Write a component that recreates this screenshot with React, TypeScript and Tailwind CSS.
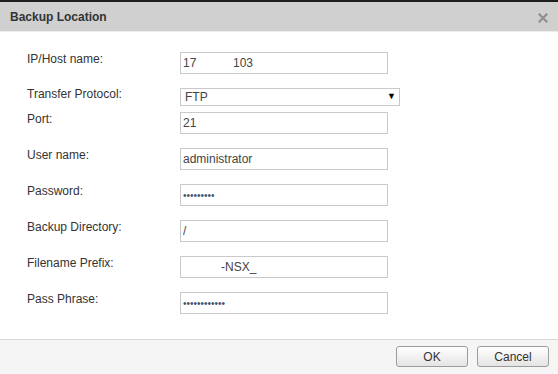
import React from 'react';

const font = { fontFamily: '"Liberation Sans", Arial, sans-serif' };

function Field({
  label,
  value,
  type = 'text',
  className = 'text-[12px] text-[#444]',
  top = 'mt-[14px]',
}: {
  label: string;
  value: string;
  type?: string;
  className?: string;
  top?: string;
}) {
  return (
    <div className={`flex items-start ${top}`}>
      <label className="w-[153px] shrink-0 text-[12px] leading-[15px] text-[#333]">{label}</label>
      <input
        type={type}
        readOnly
        value={value}
        className={`h-[22px] w-[208px] border border-[#c9c9c9] bg-white px-[2px] outline-none ${className}`}
        style={font}
      />
    </div>
  );
}

export default function App() {
  return (
    <div className="flex h-[374px] w-[558px] flex-col bg-white" style={font}>
      <div className="h-[2px] bg-[#1e1e1e]" />
      <div className="flex h-[30px] items-center justify-between border-b border-[#ececec] bg-[#d0d0d0] pl-[10px] pr-[10px]">
        <h1 className="text-[12px] font-bold text-[#333]">Backup Location</h1>
        <svg width="10" height="10" viewBox="0 0 10 10" className="mt-[3px]">
          <path d="M1.5 1.5 L8.5 8.5 M8.5 1.5 L1.5 8.5" stroke="#8f8f8f" strokeWidth="2.2" strokeLinecap="square" />
        </svg>
      </div>

      <div className="flex-1 pl-[27px] pt-[20px]">
        <Field label="IP/Host name:" value="17           103" top="" />

        <div className="mt-[14px] flex items-start">
          <label className="w-[153px] shrink-0 text-[12px] leading-[13px] text-[#333]">Transfer Protocol:</label>
          <div className="flex h-[18px] w-[220px] items-center justify-between border border-[#c9c9c9] bg-white pl-[4px] pr-[3px] text-[12px] text-[#444]">
            <span>FTP</span>
            <span className="text-[9px] text-black">▼</span>
          </div>
        </div>

        <Field label="Port:" value="21" top="mt-[6px]" />
        <Field label="User name:" value="administrator" />
        <Field label="Password:" type="password" value="123456789" className="text-[10px] text-[#3f5670]" />
        <Field label="Backup Directory:" value="/" />
        <Field label="Filename Prefix:" value="-NSX_" className="indent-[38px] text-[12px] text-[#444]" />
        <Field label="Pass Phrase:" type="password" value="123456789012" className="text-[10px] text-[#3f5670]" />
      </div>

      <div className="flex h-[35px] items-start justify-end gap-[9px] border-t border-[#dadada] bg-[#f5f5f5] pr-[9px] pt-[6px]">
        <button className="h-[21px] w-[72px] rounded-[3px] border border-[#9c9c9c] bg-gradient-to-b from-white to-[#e4e4e4] text-[12px] text-[#333]">
          OK
        </button>
        <button className="h-[21px] w-[72px] rounded-[3px] border border-[#9c9c9c] bg-gradient-to-b from-white to-[#e4e4e4] text-[12px] text-[#333]">
          Cancel
        </button>
      </div>
    </div>
  );
}
